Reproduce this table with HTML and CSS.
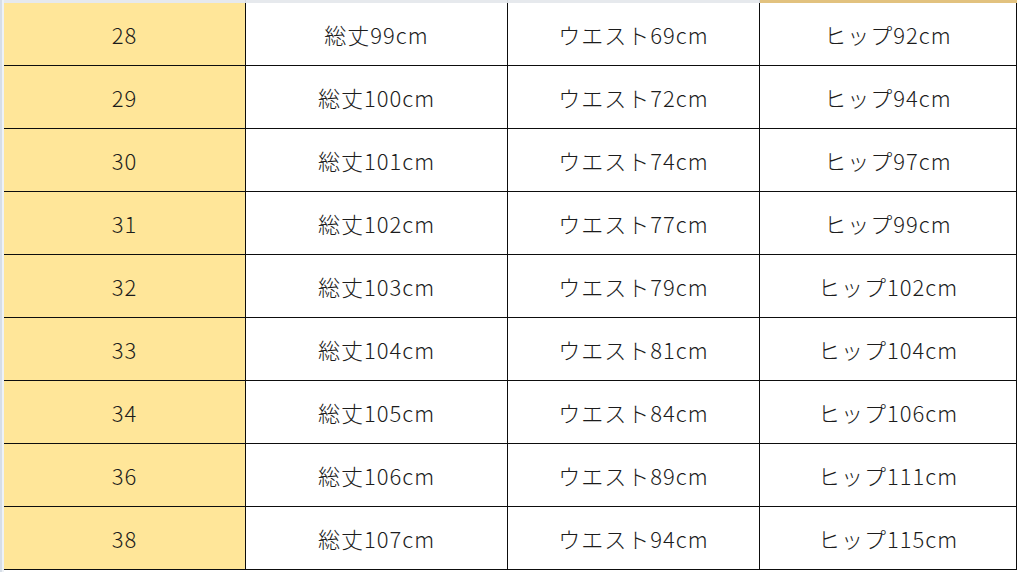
FILE: index.html
```html
<!DOCTYPE html>
<html lang="ja">
<head>
<meta charset="utf-8">
<link rel="stylesheet" href="styles.css">
</head>
<body>
<div class="frame">
  <div class="gutter"></div>
  <div class="main">
    <div class="topbar">
      <div class="tb"></div><div class="tb"></div><div class="tb"></div><div class="tb tb-sel"></div>
    </div>
    <div class="sheet">
      <div class="cell size">28</div><div class="cell">総丈99cm</div><div class="cell">ウエスト69cm</div><div class="cell">ヒップ92cm</div>
      <div class="cell size">29</div><div class="cell">総丈100cm</div><div class="cell">ウエスト72cm</div><div class="cell">ヒップ94cm</div>
      <div class="cell size">30</div><div class="cell">総丈101cm</div><div class="cell">ウエスト74cm</div><div class="cell">ヒップ97cm</div>
      <div class="cell size">31</div><div class="cell">総丈102cm</div><div class="cell">ウエスト77cm</div><div class="cell">ヒップ99cm</div>
      <div class="cell size">32</div><div class="cell">総丈103cm</div><div class="cell">ウエスト79cm</div><div class="cell">ヒップ102cm</div>
      <div class="cell size">33</div><div class="cell">総丈104cm</div><div class="cell">ウエスト81cm</div><div class="cell">ヒップ104cm</div>
      <div class="cell size">34</div><div class="cell">総丈105cm</div><div class="cell">ウエスト84cm</div><div class="cell">ヒップ106cm</div>
      <div class="cell size">36</div><div class="cell">総丈106cm</div><div class="cell">ウエスト89cm</div><div class="cell">ヒップ111cm</div>
      <div class="cell size">38</div><div class="cell">総丈107cm</div><div class="cell">ウエスト94cm</div><div class="cell">ヒップ115cm</div>
    </div>
  </div>
</div>
</body>
</html>
```
FILE: styles.css
```css
html, body {
  margin: 0;
  padding: 0;
  background: #ffffff;
  width: 1020px;
  height: 572px;
  overflow: hidden;
}
.frame {
  display: flex;
  height: 572px;
}
.gutter {
  width: 4px;
  background: linear-gradient(to right, #d7dee7 0, #d7dee7 2px, #eef2f6 2px, #eef2f6 4px);
  flex: none;
}
.main {
  display: flex;
  flex-direction: column;
}
.topbar {
  display: grid;
  grid-template-columns: 241px 261px 251px 257px;
  column-gap: 1px;
  height: 3px;
  background: #d6dae0;
}
.tb {
  background: #e6e9ed;
}
.tb-sel {
  background: #e2c27f;
}
.sheet {
  display: grid;
  grid-template-columns: 241px 261px 251px 256px;
  grid-auto-rows: 62px;
  gap: 1px;
  background: #0d0d0d;
  border-right: 1px solid #0d0d0d;
  border-bottom: 1px solid #0d0d0d;
  width: max-content;
}
.cell {
  background: #ffffff;
  display: flex;
  align-items: center;
  justify-content: center;
  font-family: "Noto Sans CJK JP", "Noto Sans", sans-serif;
  font-size: 22px;
  font-weight: 300;
  letter-spacing: 1px;
  color: #1c1c1c;
  padding-top: 0;
  box-sizing: border-box;
}
.size {
  background: #ffe699;
}
```
